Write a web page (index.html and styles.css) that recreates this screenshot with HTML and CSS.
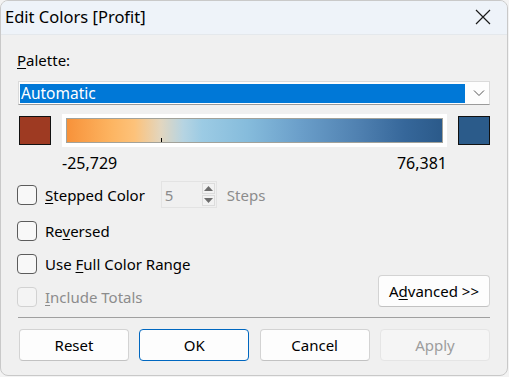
FILE: index.html
```html
<!DOCTYPE html>
<html lang="en">
<head>
<meta charset="UTF-8">
<meta name="viewport" content="width=device-width, initial-scale=1.0">
<title>Edit Colors [Profit]</title>
<link rel="stylesheet" href="styles.css">
</head>
<body>

<div class="window">
  <div class="titlebar">
    <span class="title">Edit Colors [Profit]</span>
    <svg class="close" width="16" height="16" viewBox="0 0 16 16">
      <path d="M1 1 L15 15 M15 1 L1 15" stroke="#1a1a1a" stroke-width="1.2" fill="none"/>
    </svg>
  </div>

  <div class="content">
    <div class="label"><u>P</u>alette:</div>
    <div class="select">
      <span class="select-value">Automatic</span>
      <svg class="chevron" width="12" height="8" viewBox="0 0 12 8">
        <path d="M1 1.5 L6 6.5 L11 1.5" stroke="#555" stroke-width="1" fill="none"/>
      </svg>
    </div>

    <div class="ramp-row">
      <div class="swatch swatch-neg"></div>
      <div class="ramp-frame">
        <div class="ramp"><span class="tick"></span></div>
      </div>
      <div class="swatch swatch-pos"></div>
    </div>
    <div class="range">
      <span>-25,729</span>
      <span>76,381</span>
    </div>

    <div class="stepped">
      <label class="check"><span class="box"></span><span><u>S</u>tepped Color</span></label>
      <div class="spin">
        <span class="spin-value">5</span>
        <div class="spin-arrows">
          <span class="arrow"><svg width="9" height="5" viewBox="0 0 9 5"><path d="M0 5 L4.5 0 L9 5 Z" fill="#6d6d6d"/></svg></span>
          <span class="arrow"><svg width="9" height="5" viewBox="0 0 9 5"><path d="M0 0 L4.5 5 L9 0 Z" fill="#6d6d6d"/></svg></span>
        </div>
      </div>
      <span class="steps">Steps</span>
    </div>

    <div class="options">
      <div class="checks">
        <label class="check"><span class="box"></span><span>Re<u>v</u>ersed</span></label>
        <label class="check"><span class="box"></span><span>Use <u>F</u>ull Color Range</span></label>
        <label class="check disabled"><span class="box"></span><span><u>I</u>nclude Totals</span></label>
      </div>
      <button class="btn btn-advanced">A<u>d</u>vanced &gt;&gt;</button>
    </div>

    <div class="separator"></div>

    <div class="buttons">
      <button class="btn">Reset</button>
      <button class="btn btn-default">OK</button>
      <button class="btn">Cancel</button>
      <button class="btn" disabled>Apply</button>
    </div>
  </div>
</div>

</body>
</html>
```

FILE: styles.css
```css
body {
  margin: 0;
  padding: 0;
  background-color: #f3f3f3;
  font-family: "Noto Sans", "Open Sans", sans-serif;
  font-size: 15px;
  color: #000;
}
.window {
  width: 508px;
  height: 376px;
  box-sizing: border-box;
  border: 1px solid #c9c9c9;
  border-radius: 8px;
  background-color: #f0f0f0;
  overflow: hidden;
  display: flex;
  flex-direction: column;
}
.titlebar {
  height: 33px;
  background-color: #eef3f9;
  border-bottom: 1px solid #e4e8ec;
  display: flex;
  align-items: center;
  justify-content: space-between;
  padding: 0 16px 0 4px;
}
.title {
  font-size: 16.5px;
  margin-top: -2px;
}
.close {
  margin-top: -1px;
}
.content {
  padding: 15px 17px 0 16px;
}
.label {
  line-height: 20px;
}
u {
  text-decoration-thickness: 1px;
  text-underline-offset: 2px;
}
.select {
  margin-top: 11px;
  height: 24px;
  margin-left: 1px;
  box-sizing: border-box;
  border: 1px solid #dadada;
  border-bottom-color: #9a9a9a;
  background-color: #fdfdfd;
  display: flex;
  align-items: center;
  padding: 1px 0 1px 1px;
}
.select-value {
  flex: 0 0 445px;
  height: 19px;
  line-height: 19px;
  background-color: #0078d7;
  color: #fff;
  padding-left: 1px;
  box-sizing: border-box;
  font-size: 15.5px;
}
.chevron {
  margin-left: 8px;
}
.ramp-row {
  margin-top: 9px;
  display: flex;
  align-items: center;
  gap: 11px;
  padding-left: 2px;
}
.swatch {
  width: 32px;
  height: 29px;
  box-sizing: border-box;
  border: 1px solid #111;
}
.swatch-neg {
  background-color: #9e3a22;
}
.swatch-pos {
  background-color: #2b5b8a;
}
.ramp-frame {
  width: 385px;
  height: 33px;
  box-sizing: border-box;
  padding: 4px;
  background-color: #fff;
}
.ramp {
  position: relative;
  height: 25px;
  box-sizing: border-box;
  border: 1px solid #a2a29a;
  background: linear-gradient(to right, #f7923a 0%, #fdb562 12%, #fdc27a 18%, #e2d6bf 25%, #b6d4e2 31%, #9ccbe4 36%, #86bcdc 48%, #6b9fca 62%, #4f80b0 78%, #36679a 90%, #2b5a8a 100%);
}
.tick {
  position: absolute;
  left: 94px;
  bottom: 0;
  width: 1px;
  height: 4px;
  background-color: #000;
}
.range {
  margin-top: 6px;
  display: flex;
  justify-content: space-between;
  width: 385px;
  margin-left: 45px;
  line-height: 20px;
  font-size: 16px;
}
.stepped {
  margin-top: 8px;
  display: flex;
  align-items: center;
  height: 27px;
}
.check {
  display: flex;
  align-items: center;
  gap: 8px;
  line-height: 20px;
}
.box {
  width: 20px;
  height: 20px;
  box-sizing: border-box;
  border: 1px solid #5c5c5c;
  border-radius: 4px;
  background-color: #f8f8f8;
}
.check.disabled {
  color: #8c8c8c;
}
.check.disabled .box {
  border-color: #d2d2d2;
  background-color: #f4f4f4;
}
.spin {
  margin-left: 16px;
  width: 56px;
  height: 27px;
  box-sizing: border-box;
  border: 1px solid #e3e3e3;
  display: flex;
  align-items: center;
  justify-content: space-between;
  padding: 0 1px 0 3px;
  color: #8c8c8c;
}
.spin-arrows {
  display: flex;
  flex-direction: column;
  gap: 1px;
}
.arrow {
  width: 13px;
  height: 11px;
  box-sizing: border-box;
  border: 1px solid #dcdcdc;
  background-color: #f2f2f2;
  display: flex;
  align-items: center;
  justify-content: center;
}
.steps {
  margin-left: 10px;
  color: #8c8c8c;
}
.options {
  margin-top: 13px;
  display: flex;
  justify-content: space-between;
  align-items: flex-end;
}
.checks {
  display: flex;
  flex-direction: column;
  gap: 13px;
}
.btn {
  font-family: inherit;
  font-size: 15px;
  color: #000;
  background-color: #fdfdfd;
  border: 1px solid #d3d3d3;
  border-bottom-color: #c2c2c2;
  border-radius: 4px;
  height: 32px;
  width: 110px;
  padding: 0;
}
.btn-advanced {
  width: 112px;
}
.btn-default {
  border: 1px solid #0067c0;
}
.btn:disabled {
  background-color: #f5f5f5;
  border-color: #e5e5e5;
  color: #9d9d9d;
}
.separator {
  margin-top: 10px;
  margin-left: 1px;
  height: 1px;
  background-color: #a0a0a0;
}
.buttons {
  margin-top: 11px;
  display: flex;
  justify-content: space-between;
  padding-left: 2px;
}
```
